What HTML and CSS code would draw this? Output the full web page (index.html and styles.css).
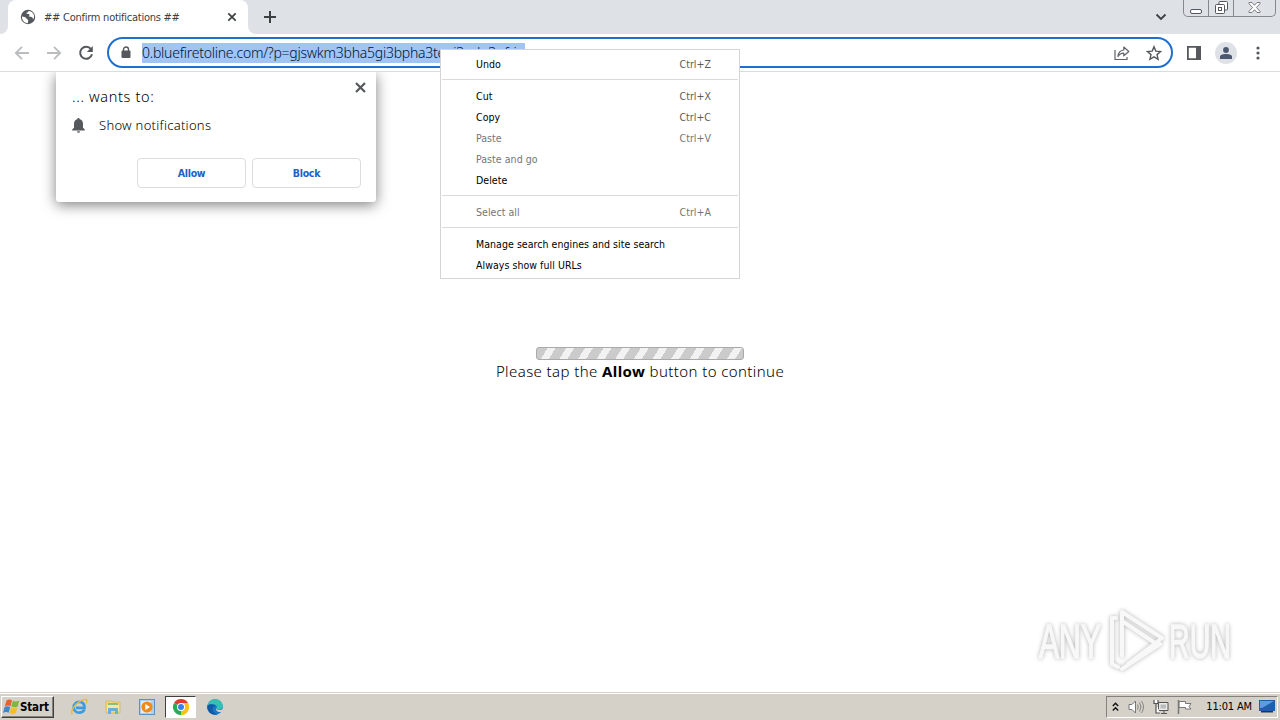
FILE: index.html
```html
<!DOCTYPE html>
<html lang="en">

<head>
    <meta charset="UTF-8">
    <meta name="viewport" content="width=device-width, initial-scale=1.0">
    <title>## Confirm notifications ##</title>
    <link rel="stylesheet" href="styles.css">
</head>

<body>
    <div class="screen">
        <!-- tab strip -->
        <div class="tab-strip">
            <div class="tab-left"></div>
            <div class="tab">
                <svg class="globe" width="16" height="16" viewBox="0 0 16 16">
                    <circle cx="8" cy="8" r="7.2" fill="#55585c" />
                    <path d="M2 7.5c2 .2 3.6.3 4.300 1.800.5 1.200 1.800.8 1.900 2.200.1 1.300-.5 1.800-.4 2.700C4 14 1.700 11 2 7.500zM8.500 1.900c-.2 1.200-.9 1.500-2 1.700-.2 1.400.8 1.500 2 1.500 1.300.1 1.100 1.300.5 2.100 1 .9 2.400.4 3.300 1.200.7.6.7 1.500.4 2.400C15.800 7.500 13.500 2 8.500 1.900z" fill="#fff" />
                </svg>
                <span class="tab-title">## Confirm notifications ##</span>
                <svg width="10" height="10" viewBox="0 0 10 10">
                    <path d="M1.300 1.300l7.400 7.400M8.700 1.300l-7.400 7.400" stroke="#3c4043" stroke-width="1.700" />
                </svg>
            </div>
            <div class="tab-right">
                <svg width="12" height="12" viewBox="0 0 12 12">
                    <path d="M6 0v12M0 6h12" stroke="#3c4043" stroke-width="2" />
                </svg>
                <svg class="chevron" width="12" height="8" viewBox="0 0 12 8">
                    <path d="M1.500 1.500L6 6l4.500-4.500" fill="none" stroke="#3c4043" stroke-width="1.800" />
                </svg>
                <div class="window-btns">
                    <div class="win-btn">
                        <svg width="13" height="5" viewBox="0 0 13 5">
                            <rect x=".5" y=".5" width="11" height="4" rx="1.500" fill="#fff" stroke="#53565c" />
                        </svg>
                    </div>
                    <div class="win-btn">
                        <svg width="13" height="13" viewBox="0 0 13 13">
                            <rect x="4" y=".5" width="8.500" height="8.500" rx="1" fill="#fff" stroke="#53565c" />
                            <rect x=".5" y="3.500" width="9" height="9" rx="1" fill="#fff" stroke="#53565c" />
                            <rect x="3.500" y="6.500" width="3" height="3" fill="#fff" stroke="#53565c" />
                        </svg>
                    </div>
                    <div class="win-btn win-close">
                        <svg width="13" height="11" viewBox="0 0 13 11">
                            <path d="M1 .5h3l2.500 2.800L9 .5h3v1.200L8.400 5.500 12 9.300v1.200H9L6.500 7.700 4 10.500H1V9.300l3.600-3.800L1 1.700z" fill="#fff" stroke="#6b6e74" stroke-width=".9" />
                        </svg>
                    </div>
                </div>
            </div>
        </div>

        <!-- toolbar -->
        <div class="toolbar">
            <svg class="nav" width="16" height="16" viewBox="0 0 16 16">
                <path d="M15 8H2M8 1.800L1.800 8 8 14.200" fill="none" stroke="#babcbe" stroke-width="1.800" />
            </svg>
            <svg class="nav" width="16" height="16" viewBox="0 0 16 16">
                <path d="M1 8h13M8 1.800L14.200 8 8 14.200" fill="none" stroke="#babcbe" stroke-width="1.800" />
            </svg>
            <svg class="nav" width="16" height="16" viewBox="0 0 16 16">
                <path d="M13 4.200A6 6 0 1 0 14 9.300" fill="none" stroke="#55585c" stroke-width="2" />
                <path d="M14.800 1v6H8.800z" fill="#55585c" />
            </svg>
            <div class="address">
                <svg class="lock" width="10" height="13" viewBox="0 0 10 13">
                    <path d="M2.500 6V3.500a2.500 2.500 0 0 1 5 0V6" fill="none" stroke="#55585c" stroke-width="1.400" />
                    <rect x=".5" y="4.500" width="9" height="7.500" rx="1" fill="#55585c" />
                </svg>
                <span class="url">0.bluefiretoline.com/?p=gjswkm3bha5gi3bpha3tegi3gdg3gfri</span>
                <svg class="share" width="16" height="16" viewBox="0 0 16 16">
                    <path d="M1 5v9.500h12V12" fill="none" stroke="#606368" stroke-width="1.200" />
                    <path d="M4 11.500C4.300 7.500 6.300 5.300 9.800 5V2l5 4.500-5 4.300V8.200C7 8.200 5.300 9.200 4 11.500z" fill="none" stroke="#606368" stroke-width="1.200" stroke-linejoin="round" />
                </svg>
                <svg width="16" height="16" viewBox="0 0 16 16">
                    <path d="M8 1.700l1.800 4.400 4.800.4-3.600 3.100 1.100 4.700L8 11.800l-4.100 2.500L5 9.600 1.400 6.500l4.800-.4z" fill="none" stroke="#55585c" stroke-width="1.400" />
                </svg>
            </div>
            <svg class="panel" width="14" height="14" viewBox="0 0 14 14">
                <path d="M0 0h14v14H0zM1.800 1.800v10.400H9V1.800z" fill="#55585c" fill-rule="evenodd" />
            </svg>
            <div class="avatar">
                <svg width="12" height="12" viewBox="0 0 12 12">
                    <circle cx="6" cy="3" r="2.900" fill="#4d5770" />
                    <path d="M0 12V9.800C0 7.800 3 7 6 7s6 .8 6 2.800V12z" fill="#4d5770" />
                </svg>
            </div>
            <svg class="dots" width="4" height="14" viewBox="0 0 4 14">
                <circle cx="2" cy="2" r="1.600" fill="#55585c" />
                <circle cx="2" cy="7" r="1.600" fill="#55585c" />
                <circle cx="2" cy="12" r="1.600" fill="#55585c" />
            </svg>
        </div>

        <!-- page -->
        <div class="page">
            <div class="progress"></div>
            <div class="message">Please tap the <b>Allow</b> button to continue</div>

            <div class="prompt">
                <svg class="prompt-close" width="11" height="11" viewBox="0 0 11 11">
                    <path d="M1 1l9 9M10 1l-9 9" stroke="#55585c" stroke-width="2.200" />
                </svg>
                <div class="prompt-title">... wants to:</div>
                <div class="prompt-row">
                    <svg width="13" height="15" viewBox="0 0 13 15">
                        <path d="M6.500 0c.8 0 1.200.6 1.200 1.300C9.800 1.800 11 3.500 11 5.800v4l1.800 1.700v.9H.2v-.9L2 9.800v-4c0-2.300 1.200-4 3.300-4.500C5.300.6 5.700 0 6.500 0zM5 13.200h3a1.500 1.500 0 0 1-3 0z" fill="#55585c" />
                    </svg>
                    <span>Show notifications</span>
                </div>
                <div class="prompt-btns">
                    <button type="button">Allow</button>
                    <button type="button">Block</button>
                </div>
            </div>

            <svg class="watermark" width="210" height="76" viewBox="0 0 210 76">
                <g class="mark-text">
                    <text x="9" y="54" textLength="62" lengthAdjust="spacingAndGlyphs">ANY</text>
                    <text x="139" y="54" textLength="62" lengthAdjust="spacingAndGlyphs">RUN</text>
                </g>
                <path d="M86 14h-4v46l6 3M92 52V8l40 26-34 26M92 17l36 24M92 65l38-25" class="mark-logo" />
            </svg>
        </div>

        <!-- taskbar -->
        <div class="taskbar">
            <div class="start">
                <svg width="17" height="16" viewBox="0 0 17 16">
                    <path d="M3.500 1.500C5.500 0 7.200.3 9 1.300L7.500 7.200C5.700 6.200 4 6.200 1.800 7.400z" fill="#e8612c" />
                    <path d="M9.800 1.700c2 1 4 1 6.500-.2l-1.600 5.900c-2.200 1.200-4.400 1.200-6.400.2z" fill="#82b53c" />
                    <path d="M1.500 8.300c2.100-1.200 3.800-1.200 5.700-.2l-1.500 5.700c-1.900-1-3.600-1-5.700.1z" fill="#3d87cf" />
                    <path d="M8 8.500c2.100 1 4.200 1 6.400-.1l-1.600 5.800c-2.200 1.100-4.300 1-6.300 0z" fill="#f5bd2c" />
                </svg>
                <span>Start</span>
            </div>
            <div class="task">
                <svg width="18" height="18" viewBox="0 0 18 18">
                    <path d="M14.500 11.500c-1 2-2.800 3.200-5.200 3.200-3.400 0-5.600-2.300-5.600-5.500 0-3.100 2.300-5.400 5.500-5.400 3.400 0 5.600 2.500 5.300 6H6" fill="none" stroke="#3b9de0" stroke-width="2.700" />
                    <path d="M2.500 16.200C.5 15 2 10.500 6 6.500S15.500.4 16.700 2c.6.9.1 2.200-.7 3.500" fill="none" stroke="#e9b93e" stroke-width="1.400" />
                </svg>
            </div>
            <div class="task">
                <svg width="16" height="16" viewBox="0 0 16 16">
                    <path d="M1 2h6l1 1h7v11H1z" fill="#f2d675" stroke="#d1ae4b" stroke-width=".6" />
                    <path d="M3 4h10v4H3z" fill="#7fc47a" />
                    <path d="M2 6h12v6H2z" fill="#f8e7a2" />
                    <path d="M3 15V9h10v6h-3v-3H6v3z" fill="#67afdc" />
                </svg>
            </div>
            <div class="task">
                <svg width="16" height="16" viewBox="0 0 16 16">
                    <rect x=".5" y=".5" width="15" height="15" fill="#a9d2f2" stroke="#5c91c4" />
                    <rect x="2" y="2" width="10" height="12" fill="#dceefa" />
                    <circle cx="8" cy="8" r="5.600" fill="#f08a1c" />
                    <path d="M6.300 5v6L11 8z" fill="#fff" />
                </svg>
            </div>
            <div class="task active">
                <svg width="16" height="16" viewBox="0 0 16 16">
                    <path d="M8 8L1.070 4A8 8 0 0 1 14.930 4z" fill="#e33b2e" />
                    <path d="M8 8l6.930-4A8 8 0 0 1 8 16z" fill="#fbc116" />
                    <path d="M8 8v8A8 8 0 0 1 1.070 4z" fill="#2da94f" />
                    <path d="M8 4h6.900A8 8 0 0 1 8 16l3.500-6z" fill="#fbc116" />
                    <circle cx="8" cy="8" r="4" fill="#fff" />
                    <circle cx="8" cy="8" r="3" fill="#3c7ded" />
                </svg>
            </div>
            <div class="task">
                <svg width="16" height="16" viewBox="0 0 16 16">
                    <circle cx="8" cy="8" r="7.800" fill="#1679c7" />
                    <path d="M.4 6.500C1.500 2 5 .2 8.300.2c4.500 0 7.500 3.400 7.500 6.800 0 2.500-2 3.800-4.200 3.800-1.500 0-2.300-.5-2.100-1.200C10.500 8 9.500 5.200 6.200 5.200 3.400 5.200 1.200 6 .4 6.500z" fill="#35c1b0" />
                    <path d="M.3 7c1.200-2 5.700-2.600 8 .2C6 7.500 4.700 9.500 6 12c1 2 3 3 4.800 3.200C5 17.200-.2 13 .3 7z" fill="#1459a5" />
                    <path d="M9.500 8.200c-.6 1.400 0 2.600 2.100 2.800 1.700.1 2.900-.3 3.800-1.100l.6 1.500-1.200 1.300c-3.500 1.200-7-1.200-5.300-4.500z" fill="#d5d1c9" />
                </svg>
            </div>
            <div class="tray">
                <svg width="7" height="10" viewBox="0 0 7 10">
                    <path d="M.8 4l2.700-2.700L6.200 4M.8 8.500l2.700-2.700 2.700 2.700" fill="none" stroke="#111" stroke-width="1.400" />
                </svg>
                <svg class="speaker" width="17" height="16" viewBox="0 0 17 16">
                    <path d="M1 5.500h3L7.500 2v12L4 10.500H1z" fill="#fff" stroke="#777" />
                    <path d="M9.500 5.500q1.500 2.500 0 5M11.500 3.500q3 4.500 0 9M13.500 2q4 6 0 12" fill="none" stroke="#858585" />
                </svg>
                <svg class="network" width="16" height="16" viewBox="0 0 16 16">
                    <path d="M5.500 3.500h9.500v8H5.500zM8 14.500h6M11 12v2" fill="#e9e9e7" stroke="#555" />
                    <path d="M7.500 5.500H13v4H7.500z" fill="#bbb" />
                    <path d="M1 1v3.500h4V1M3 4.500V14h4" fill="#fff" stroke="#555" stroke-width="1.200" />
                </svg>
                <svg class="flag" width="16" height="16" viewBox="0 0 16 16">
                    <path d="M2 2.500h6.500v2H14l-2 3 2 2.500H8.500V8.500H2z" fill="#fff" stroke="#777" />
                    <path d="M1.500 1v14" stroke="#777" stroke-width="1.500" />
                </svg>
                <span class="clock">11:01 AM</span>
                <svg width="16" height="13" viewBox="0 0 16 13">
                    <rect width="16" height="11" fill="#205eaf" />
                    <path d="M1 1h14L3 8H1z" fill="#5d9ce0" />
                    <path d="M2 11h12v1.500H2z" fill="#24364f" />
                </svg>
            </div>
        </div>

        <!-- context menu over the address bar -->
        <div class="menu">
            <div class="item"><span>Undo</span><span class="key">Ctrl+Z</span></div>
            <div class="line"></div>
            <div class="item"><span>Cut</span><span class="key">Ctrl+X</span></div>
            <div class="item"><span>Copy</span><span class="key">Ctrl+C</span></div>
            <div class="item off"><span>Paste</span><span class="key">Ctrl+V</span></div>
            <div class="item off"><span>Paste and go</span></div>
            <div class="item"><span>Delete</span></div>
            <div class="line"></div>
            <div class="item off"><span>Select all</span><span class="key">Ctrl+A</span></div>
            <div class="line"></div>
            <div class="item"><span>Manage search engines and site search</span></div>
            <div class="item"><span>Always show full URLs</span></div>
        </div>
    </div>
</body>

</html>
```
FILE: styles.css
```css
* {
    box-sizing: border-box;
}

body {
    margin: 0;
    font-family: "DejaVu Sans Condensed", "DejaVu Sans", sans-serif;
    font-size: 11px;
    color: #000;
}

svg {
    display: block;
    flex-shrink: 0;
}

.screen {
    position: relative;
    width: 1280px;
    height: 720px;
    overflow: hidden;
    display: flex;
    flex-direction: column;
    background-color: #fff;
}

/* tabs */
.tab-strip {
    display: flex;
    height: 34px;
    background-color: #fff;
}

.tab-left {
    width: 8px;
    background-color: #dee1e6;
    border-bottom-right-radius: 8px;
}

.tab {
    width: 240px;
    display: flex;
    align-items: center;
    padding: 0 11px 0 12px;
    background: linear-gradient(#dee1e6 50%, #fff 50%);
    position: relative;
    z-index: 0;
}

.tab::before {
    content: "";
    position: absolute;
    inset: 0;
    z-index: -1;
    background-color: #fff;
    border-radius: 8px 8px 0 0;
}

.tab-title {
    flex: 1;
    margin-left: 8px;
    font-size: 11px;
    letter-spacing: -0.25px;
    color: #3c4043;
    white-space: nowrap;
}

.tab-right {
    flex: 1;
    display: flex;
    align-items: center;
    padding: 0 4px 0 16px;
    background-color: #dee1e6;
    border-bottom-left-radius: 8px;
}

.chevron {
    margin-left: auto;
    margin-right: 16px;
}

.window-btns {
    display: flex;
    align-self: flex-start;
    width: 93px;
    height: 17px;
    border: 1px solid #85888e;
    border-top: 0;
    border-radius: 0 0 5px 5px;
}

.win-btn {
    width: 25px;
    display: flex;
    justify-content: center;
    align-items: flex-end;
    padding-bottom: 2px;
    border-right: 1px solid #85888e;
}

.win-close {
    flex: 1;
    border-right: 0;
    padding-bottom: 3px;
}

/* toolbar */
.toolbar {
    height: 38px;
    display: flex;
    align-items: center;
    padding: 0 20px 0 14px;
    border-bottom: 1px solid #dadce0;
}

.nav {
    margin-right: 16px;
}

.nav + .nav + .nav {
    margin-right: 13px;
}

.address {
    width: 1066px;
    height: 31px;
    display: flex;
    align-items: center;
    padding: 0 9px 0 12px;
    border: 2px solid #1f6fd0;
    border-radius: 16px;
}

.url {
    width: 383px;
    height: 20px;
    margin-left: 11px;
    line-height: 20px;
    font-family: "Noto Sans", sans-serif;
    font-size: 14px;
    font-weight: 300;
    letter-spacing: -0.25px;
    color: #001530;
    background-color: #9fc4f5;
    white-space: nowrap;
}

.share {
    margin-left: auto;
    margin-right: 16px;
}

.panel {
    margin-left: 14px;
}

.avatar {
    width: 22px;
    height: 22px;
    margin-left: 14px;
    display: flex;
    justify-content: center;
    align-items: center;
    background-color: #dee1e6;
    border-radius: 50%;
}

.dots {
    margin-left: auto;
}

/* page */
.page {
    position: relative;
    height: 620px;
    overflow: hidden;
    display: flex;
    flex-direction: column;
    align-items: center;
    padding-top: 275px;
}

.progress {
    width: 208px;
    height: 13px;
    border: 1px solid #aaa;
    border-radius: 3px;
    background: repeating-linear-gradient(122deg, #cbcbcb 0 9px, #f2f2f2 9px 15.8px);
}

.message {
    line-height: 23px;
    font-family: "Noto Sans", sans-serif;
    font-size: 15px;
    font-weight: 300;
    letter-spacing: 0.4px;
    white-space: nowrap;
}

.message b {
    font-weight: 700;
}

.prompt {
    position: absolute;
    left: 56px;
    top: 0;
    width: 320px;
    height: 130px;
    padding: 14px 15px 14px 16px;
    background-color: #fff;
    border-radius: 0 0 3px 3px;
    box-shadow: 0 3px 14px rgba(0, 0, 0, 0.5);
    display: flex;
    flex-direction: column;
    font-family: "Noto Sans", sans-serif;
    font-weight: 300;
}

.prompt-close {
    position: absolute;
    right: 10px;
    top: 10px;
}

.prompt-title {
    line-height: 20px;
    font-size: 14.5px;
    letter-spacing: 0.65px;
}

.prompt-row {
    display: flex;
    align-items: center;
    margin-top: 9px;
    height: 20px;
    font-size: 13px;
    letter-spacing: 0.28px;
}

.prompt-row span {
    margin-left: 14px;
}

.prompt-btns {
    display: flex;
    justify-content: flex-end;
    gap: 6px;
    margin-top: auto;
}

.prompt-btns button {
    width: 109px;
    height: 30px;
    padding: 0;
    border: 1px solid #dadce0;
    border-radius: 4px;
    background-color: #fff;
    color: #1a62c6;
    font-family: "DejaVu Sans Condensed", sans-serif;
    font-size: 10.5px;
    font-weight: bold;
    letter-spacing: -0.3px;
}

.watermark {
    position: absolute;
    left: 1030px;
    top: 532px;
    filter: drop-shadow(0 0 2px rgba(0, 0, 0, 0.3));
}

.mark-text {
    font-family: "Liberation Sans", sans-serif;
    font-size: 49px;
    fill: #f8f8f8;
    stroke: #f8f8f8;
    stroke-width: 1.5px;
}

.mark-logo {
    fill: none;
    stroke: #f8f8f8;
    stroke-width: 4px;
    stroke-linejoin: round;
    stroke-linecap: round;
}

/* context menu */
.menu {
    position: absolute;
    left: 440px;
    top: 49px;
    width: 300px;
    height: 230px;
    padding: 4px 1px 2px;
    background-color: #fff;
    border: 1px solid #d5d5d5;
}

.item {
    display: flex;
    justify-content: space-between;
    height: 21px;
    line-height: 21px;
    padding: 0 27px 0 34px;
    font-size: 10.5px;
    letter-spacing: 0.05px;
}

.line {
    height: 1px;
    margin: 4px 0 6px;
    background-color: #d9d9d9;
}

.key {
    color: #5c5c5c;
}

.off,
.off .key {
    color: #757575;
}

/* taskbar */
.taskbar {
    height: 28px;
    display: flex;
    align-items: center;
    padding: 0 2px 0 1px;
    background-color: #d5d1c9;
    border-top: 1px solid #d5d1c9;
    box-shadow: inset 0 1px 0 #fff;
}

.start {
    width: 53px;
    height: 22px;
    margin-right: 9px;
    display: flex;
    align-items: center;
    padding-left: 1px;
    font-size: 11.5px;
    font-weight: bold;
    letter-spacing: -0.15px;
    color: #000;
    border: 1px solid;
    border-color: #fff #404040 #404040 #fff;
    box-shadow: inset -1px -1px 0 #85827b;
}

.task {
    width: 31px;
    height: 22px;
    margin-right: 3px;
    display: flex;
    justify-content: center;
    align-items: center;
}

.active {
    background-color: #fff;
    border: 1px solid;
    border-color: #404040 #fff #fff #404040;
}

.tray {
    width: 172px;
    height: 22px;
    margin-left: auto;
    display: flex;
    align-items: center;
    padding: 0 2px 0 5px;
    border: 1px solid;
    border-color: #85827b #fff #fff #85827b;
}

.speaker {
    margin-left: 9px;
}

.network {
    margin-left: 8px;
}

.flag {
    margin-left: 8px;
}

.clock {
    margin-left: auto;
    margin-right: 7px;
    font-size: 11px;
    letter-spacing: -0.15px;
    white-space: nowrap;
}
```
